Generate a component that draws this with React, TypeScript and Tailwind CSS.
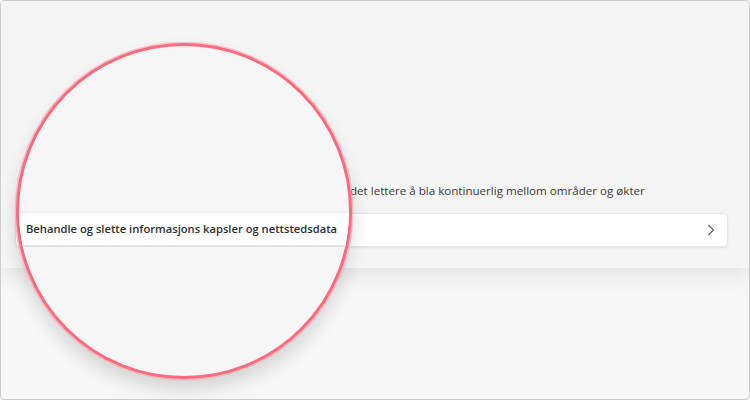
import React from "react";

export default function App() {
  const font = { fontFamily: '"Open Sans", "Noto Sans", Arial, sans-serif' };
  return (
    <div className="w-[750px] h-[400px] bg-white" style={font}>
      <div className="relative w-[750px] h-[400px] border border-[#cccccc] rounded-[4px] bg-[#f7f7f7] overflow-hidden">
        <div className="h-[267px] bg-[#f5f5f5] shadow-[0_6px_22px_rgba(0,0,0,0.09)] flex flex-col justify-end pb-[21px] pr-[21px] pl-[14px]">
          <div className="pl-[335px] text-[11.6px] leading-[16px] text-[#3b3b3b] mb-[14px] whitespace-nowrap">
            det lettere å bla kontinuerlig mellom områder og økter
          </div>
          <div className="h-[34px] bg-white rounded-[4px] border border-[#e6e6e6] shadow-[0_1px_2px_rgba(0,0,0,0.08)] flex items-center justify-end pr-[12px]">
            <svg width="8" height="12" viewBox="0 0 8 12" fill="none">
              <path d="M1.5 1 L6.5 6 L1.5 11" stroke="#5a5a5a" strokeWidth="1.1" />
            </svg>
          </div>
        </div>
        <div className="absolute left-[15px] top-[42px] w-[336px] h-[336px] rounded-full border-[3px] border-[#fb6a80] bg-[#f6f6f6] overflow-hidden shadow-[0_0_0_1.5px_rgba(255,160,175,0.55),0_10px_18px_rgba(0,0,0,0.15)]">
          <div className="mt-[166px] h-[35px] bg-white border-t border-[#ececec] border-b-2 border-b-[#e2e2e2] flex items-center pl-[7px]">
            <span className="text-[11.2px] font-semibold text-[#2f2f2f] whitespace-nowrap">
              Behandle og slette informasjons kapsler og nettstedsdata
            </span>
          </div>
        </div>
      </div>
    </div>
  );
}
